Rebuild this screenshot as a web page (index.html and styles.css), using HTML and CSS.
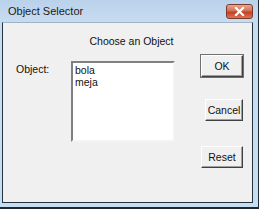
FILE: index.html
```html
<!DOCTYPE html>
<html lang="en">
<head>
    <meta charset="UTF-8">
    <title>Object Selector</title>
    <link rel="stylesheet" href="styles.css">
</head>
<body>
    <div class="window">
        <div class="titlebar">
            <span class="title">Object Selector</span>
            <button class="close-btn" aria-label="Close">
                <svg width="11" height="9" viewBox="0 0 11 9">
                    <path d="M2 1 L9 8 M9 1 L2 8" stroke="#fff" stroke-width="2.2" stroke-linecap="square"/>
                </svg>
            </button>
        </div>
        <div class="client">
            <div class="heading">Choose an Object</div>
            <div class="body-row">
                <label class="field-label" for="object-list">Object:</label>
                <div class="listbox" id="object-list">
                    <div class="list-item">bola</div>
                    <div class="list-item">meja</div>
                </div>
                <div class="buttons">
                    <button class="btn btn-ok">OK</button>
                    <button class="btn btn-cancel">Cancel</button>
                    <button class="btn btn-reset">Reset</button>
                </div>
            </div>
        </div>
    </div>
</body>
</html>
```
FILE: styles.css
```css
body {
    margin: 0;
    background: #fff;
    font-family: "Liberation Sans", Arial, sans-serif;
}
.window {
    width: 259px;
    height: 209px;
    box-sizing: border-box;
    display: flex;
    flex-direction: column;
    padding: 0 5px 4px 2px;
    background: linear-gradient(to bottom, #b9d1ea 0, #c8dcf0 22px, #c6def2 100%);
    border-right: 1px solid #1e2a33;
    border-bottom: 2px solid #1e2a33;
}
.titlebar {
    height: 22px;
    display: flex;
    align-items: center;
    justify-content: space-between;
    padding: 0 0 0 6px;
    flex-shrink: 0;
}
.title {
    font-size: 11px;
    color: #1b1b1b;
}
.close-btn {
    width: 27px;
    height: 15px;
    margin-top: 1px;
    padding: 0;
    border: 1px solid #7c3a2c;
    border-radius: 3px;
    background: linear-gradient(to bottom, #e9a793 0, #d56f52 45%, #c2401f 55%, #d9765b 100%);
    display: flex;
    align-items: center;
    justify-content: center;
}
.client {
    flex: 1;
    background: #f0f0f0;
    border: 1px solid #27343d;
    border-top-color: #9fb3c8;
    display: flex;
    flex-direction: column;
    font-size: 10.5px;
    color: #111;
}
.heading {
    text-align: center;
    padding: 12px 0 0 8px;
    font-size: 10.5px;
    height: 20px;
}
.body-row {
    display: flex;
    align-items: flex-start;
}
.field-label {
    width: 55px;
    padding: 8px 0 0 13px;
}
.listbox {
    width: 98px;
    height: 76px;
    background: #fff;
    border-style: solid;
    border-width: 2px;
    border-color: #808080 #f4f4f4 #f4f4f4 #808080;
    padding: 1px 0 0 2px;
    margin-top: 6px;
    line-height: 12px;
}
.buttons {
    margin-left: 25px;
    width: 43px;
    display: flex;
    flex-direction: column;
    align-items: flex-end;
}
.btn {
    height: 22px;
    padding: 0;
    background: #f0f0f0;
    font-family: "Liberation Sans", Arial, sans-serif;
    font-size: 10.5px;
    color: #111;
    border: 1px solid;
    border-color: #fff #404040 #404040 #fff;
    box-shadow: inset -1px -1px 0 #a0a0a0;
}
.btn-ok {
    width: 42px;
    outline: 1px solid #707070;
    outline-offset: 0;
}
.btn-cancel {
    width: 38px;
    margin-top: 22px;
}
.btn-reset {
    width: 42px;
    margin-top: 25px;
}
```
